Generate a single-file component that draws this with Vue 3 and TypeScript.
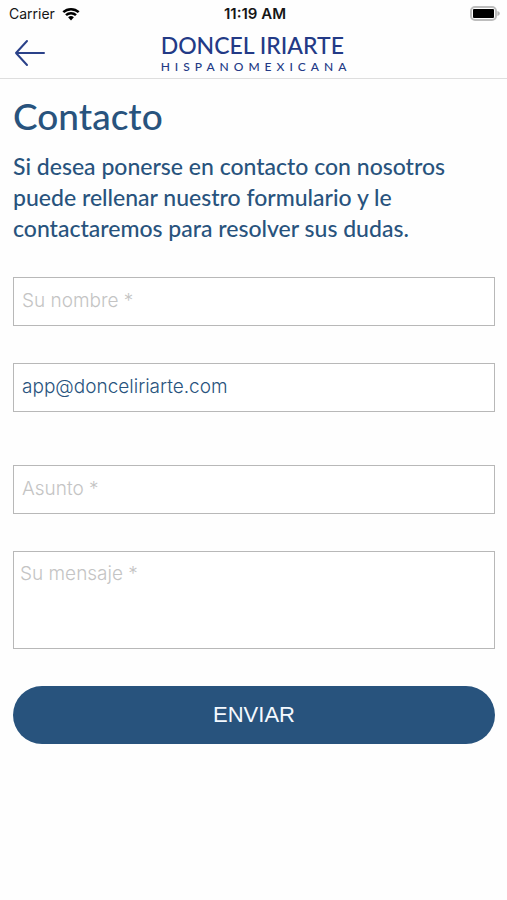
<script setup lang="ts">
import { reactive } from 'vue'

interface ContactForm {
  name: string
  email: string
  subject: string
  message: string
}

const form = reactive<ContactForm>({
  name: '',
  email: 'app@donceliriarte.com',
  subject: '',
  message: '',
})
</script>

<template>
  <div class="screen">
    <div class="status">
      <span class="carrier">
        Carrier
        <svg class="wifi" viewBox="0 0 18 14" aria-hidden="true">
          <path d="M1.3 5.2a11.2 11.2 0 0 1 15.4 0" />
          <path d="M4 8.2a7.2 7.2 0 0 1 10 0" />
          <path class="dot" d="M6.1 10.3a4.2 4.2 0 0 1 5.8 0L9 13.4z" />
        </svg>
      </span>
      <span class="time">11:19 AM</span>
      <svg class="battery" viewBox="0 0 32 16" aria-hidden="true">
        <rect class="shell" x="2" y="1" width="25" height="13" rx="4" />
        <rect class="charge" x="4" y="3" width="21" height="9" rx="1" />
        <path class="tip" d="M28.4 5c1.5.5 2.4 1.4 2.4 2.5s-.9 2-2.4 2.5z" />
      </svg>
    </div>

    <header class="bar">
      <a class="back" href="#" aria-label="Volver">
        <svg viewBox="0 0 32 28" aria-hidden="true">
          <path d="M13 2 2 14l11 12M2 14h28" />
        </svg>
      </a>
      <div class="brand">
        <span class="brand-name">DONCEL IRIARTE</span>
        <span class="brand-sub">HISPANOMEXICANA</span>
      </div>
    </header>

    <main class="content">
      <h1>Contacto</h1>
      <p class="intro">
        Si desea ponerse en contacto con nosotros puede rellenar nuestro formulario y le
        contactaremos para resolver sus dudas.
      </p>
      <form class="form" @submit.prevent>
        <input v-model="form.name" type="text" aria-label="Su nombre" placeholder="Su nombre *" />
        <input v-model="form.email" class="email" type="email" aria-label="Email" />
        <input v-model="form.subject" type="text" aria-label="Asunto" placeholder="Asunto *" />
        <textarea v-model="form.message" aria-label="Su mensaje" placeholder="Su mensaje *"></textarea>
        <button type="submit">ENVIAR</button>
      </form>
    </main>
  </div>
</template>

<style>
body {
  background: #fefefe;
}
</style>

<style scoped>
.screen {
  font-family: 'Liberation Sans', sans-serif;
  color: #28537d;
}

.status {
  display: grid;
  grid-template-columns: 1fr auto 1fr;
  align-items: center;
  height: 27px;
  padding: 0 6px 0 9px;
  color: #161616;
  font-family: Inter, sans-serif;
  font-size: 14px;
}

.carrier {
  display: flex;
  align-items: center;
  gap: 7px;
}

.wifi {
  width: 18px;
  height: 14px;
  fill: none;
  stroke: #000;
  stroke-width: 2.5;
}

.wifi .dot {
  fill: #000;
  stroke: none;
}

.time {
  font-size: 15px;
  font-weight: 600;
}

.battery {
  justify-self: end;
  width: 32px;
  height: 16px;
}

.shell {
  fill: #fff;
  stroke: #bdbdbd;
  stroke-width: 2;
}

.charge {
  fill: #000;
}

.tip {
  fill: #b5b5b5;
}

.bar {
  display: grid;
  grid-template-columns: 1fr auto 1fr;
  align-items: center;
  height: 51px;
  padding: 0 14px;
  border-bottom: 1px solid #dedede;
  color: #233a86;
  font-family: Lato, sans-serif;
}

.back {
  display: flex;
  justify-self: start;
}

.back svg {
  width: 32px;
  height: 28px;
  fill: none;
  stroke: #2a4189;
  stroke-width: 2;
  stroke-linecap: round;
  stroke-linejoin: round;
}

.brand {
  display: flex;
  flex-direction: column;
}

.brand-name {
  font-size: 23px;
  font-weight: 500;
  line-height: 28px;
}

.brand-sub {
  font-size: 12px;
  font-weight: 500;
  line-height: 15px;
  letter-spacing: 5px;
  margin-right: -5px;
}

.content {
  padding: 15px 12px 0 13px;
}

h1 {
  margin: 0;
  font-family: Lato, sans-serif;
  font-size: 37px;
  font-weight: 500;
  line-height: 44px;
}

.intro {
  margin: 13px 0 33px;
  font-family: Lato, sans-serif;
  font-size: 23px;
  font-weight: 500;
  line-height: 31px;
}

.form {
  display: flex;
  flex-direction: column;
  gap: 37px;
}

input,
textarea {
  box-sizing: border-box;
  width: 100%;
  margin: 0;
  border: 1px solid #b8b8b8;
  border-radius: 0;
  background: #fff;
  color: #28537d;
  font-family: Inter, sans-serif;
  font-size: 19px;
  font-weight: 300;
  line-height: 24px;
  outline: none;
}

input {
  height: 49px;
  padding: 0 8px 2px;
}

textarea {
  display: block;
  height: 98px;
  padding: 10px 6px;
  resize: none;
}

.email {
  margin-bottom: 16px;
}

input::placeholder,
textarea::placeholder {
  color: #c4c4c4;
  opacity: 1;
}

button {
  height: 58px;
  border: 0;
  border-radius: 29px;
  background: #28537d;
  color: #f4f9ff;
  font-family: 'Liberation Sans', sans-serif;
  font-size: 22px;
}
</style>
